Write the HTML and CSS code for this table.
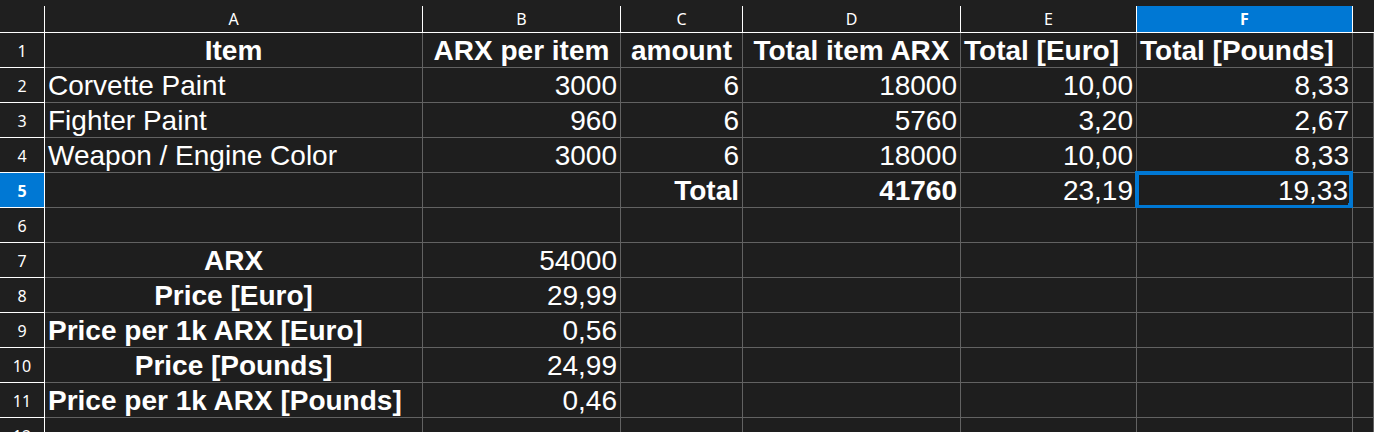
FILE: index.html
```html
<!DOCTYPE html>
<html>
<head>
<meta charset="utf-8">
<link rel="stylesheet" href="styles.css">
</head>
<body>
<div class="sheet">
  <div class="grid">
    <div class="corner"></div>
    <div class="colh">A</div>
    <div class="colh">B</div>
    <div class="colh">C</div>
    <div class="colh">D</div>
    <div class="colh">E</div>
    <div class="colh sel">F</div>
    <div class="colh last"></div>

    <div class="rowh">1</div>
    <div class="c b ctr">Item</div>
    <div class="c b ctr">ARX per item</div>
    <div class="c b ctr">amount</div>
    <div class="c b ctr">Total item ARX</div>
    <div class="c b">Total [Euro]</div>
    <div class="c b">Total [Pounds]</div>
    <div class="c"></div>

    <div class="rowh">2</div>
    <div class="c">Corvette Paint</div>
    <div class="c r">3000</div>
    <div class="c r">6</div>
    <div class="c r">18000</div>
    <div class="c r">10,00</div>
    <div class="c r">8,33</div>
    <div class="c"></div>

    <div class="rowh">3</div>
    <div class="c">Fighter Paint</div>
    <div class="c r">960</div>
    <div class="c r">6</div>
    <div class="c r">5760</div>
    <div class="c r">3,20</div>
    <div class="c r">2,67</div>
    <div class="c"></div>

    <div class="rowh">4</div>
    <div class="c">Weapon / Engine Color</div>
    <div class="c r">3000</div>
    <div class="c r">6</div>
    <div class="c r">18000</div>
    <div class="c r">10,00</div>
    <div class="c r">8,33</div>
    <div class="c"></div>

    <div class="rowh sel">5</div>
    <div class="c"></div>
    <div class="c"></div>
    <div class="c b r">Total</div>
    <div class="c b r">41760</div>
    <div class="c r">23,19</div>
    <div class="c r active">19,33<span class="cursor"></span><span class="handle"></span></div>
    <div class="c"></div>

    <div class="rowh">6</div>
    <div class="c"></div><div class="c"></div><div class="c"></div><div class="c"></div><div class="c"></div><div class="c"></div><div class="c"></div>

    <div class="rowh">7</div>
    <div class="c b ctr">ARX</div>
    <div class="c r">54000</div>
    <div class="c"></div><div class="c"></div><div class="c"></div><div class="c"></div><div class="c"></div>

    <div class="rowh">8</div>
    <div class="c b ctr">Price [Euro]</div>
    <div class="c r">29,99</div>
    <div class="c"></div><div class="c"></div><div class="c"></div><div class="c"></div><div class="c"></div>

    <div class="rowh">9</div>
    <div class="c b">Price per 1k ARX [Euro]</div>
    <div class="c r">0,56</div>
    <div class="c"></div><div class="c"></div><div class="c"></div><div class="c"></div><div class="c"></div>

    <div class="rowh">10</div>
    <div class="c b ctr">Price [Pounds]</div>
    <div class="c r">24,99</div>
    <div class="c"></div><div class="c"></div><div class="c"></div><div class="c"></div><div class="c"></div>

    <div class="rowh">11</div>
    <div class="c b">Price per 1k ARX [Pounds]</div>
    <div class="c r">0,46</div>
    <div class="c"></div><div class="c"></div><div class="c"></div><div class="c"></div><div class="c"></div>

    <div class="rowh">12</div>
    <div class="c"></div><div class="c"></div><div class="c"></div><div class="c"></div><div class="c"></div><div class="c"></div><div class="c"></div>
  </div>
</div>
</body>
</html>
```
FILE: styles.css
```css
html, body {
  margin: 0;
  padding: 0;
  background: #1e1e1e;
}

.sheet {
  height: 432px;
  overflow: hidden;
  padding-top: 6px;
  box-sizing: border-box;
  background: #1f1f1f;
}

.grid {
  display: grid;
  grid-template-columns: 45px 378px 198px 122px 218px 176px 216px 1fr;
  grid-template-rows: 27px repeat(12, 35px);
}

.grid > div {
  box-sizing: border-box;
}

.corner {
  background: #1f1f1f;
  border-right: 1px solid #ffffff;
  border-bottom: 1px solid #ffffff;
}

.colh {
  background: #1f1f1f;
  border-right: 1px solid #ffffff;
  border-bottom: 1px solid #ffffff;
  color: #ffffff;
  font-family: "Noto Sans", "Open Sans", sans-serif;
  font-size: 16px;
  display: flex;
  align-items: center;
  justify-content: center;
}

.colh.last {
  border-right: none;
}

.colh.sel {
  background: #0078d4;
  font-weight: bold;
}

.rowh {
  background: #1f1f1f;
  border-right: 1px solid #ffffff;
  border-bottom: 1px solid #ffffff;
  color: #ffffff;
  font-family: "Noto Sans", "Open Sans", sans-serif;
  font-size: 16px;
  display: flex;
  align-items: center;
  justify-content: center;
  padding-top: 2px;
}

.rowh.sel {
  background: #0078d4;
  font-weight: bold;
}

.c {
  background: #1e1e1e;
  border-right: 1px solid #626262;
  border-bottom: 1px solid #626262;
  color: #ffffff;
  font-family: "Liberation Sans", Arial, sans-serif;
  font-size: 28px;
  white-space: nowrap;
  display: flex;
  align-items: flex-end;
  justify-content: flex-start;
  padding: 0 3px;
  position: relative;
}

.c.b {
  font-weight: bold;
}

.c.r {
  justify-content: flex-end;
}

.c.ctr {
  justify-content: center;
}

.c.active {
  padding-right: 4px;
}

.cursor {
  position: absolute;
  left: -2px;
  top: -2px;
  width: 218px;
  height: 38px;
  border: 4px solid #0078d4;
  box-sizing: border-box;
}

.handle {
  position: absolute;
  left: 211px;
  top: 30px;
  width: 7px;
  height: 8px;
  background: #0078d4;
}
```
